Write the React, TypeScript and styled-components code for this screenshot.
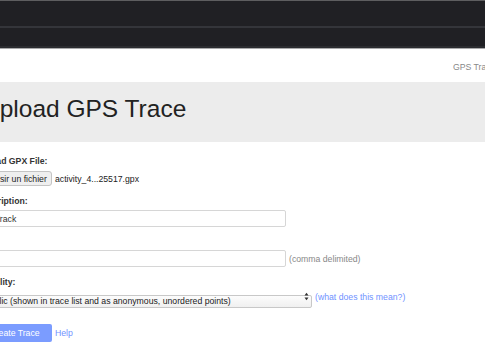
import styled, { createGlobalStyle } from 'styled-components';

const GlobalStyle = createGlobalStyle`
  html, body {
    margin: 0;
    padding: 0;
    background: #fff;
    overflow: hidden;
  }
  body {
    font-family: "Liberation Sans", Arial, Helvetica, sans-serif;
    color: #333;
  }
`;

const Viewport = styled.div`
  width: 485px;
  height: 360px;
  overflow: hidden;
`;

const Chrome = styled.div`
  display: flex;
  flex-direction: column;
`;

const ChromeBand = styled.div<{ $h: number; $bg: string }>`
  height: ${(p) => p.$h}px;
  background: ${(p) => p.$bg};
`;

const Page = styled.div`
  margin-left: -23px;
  width: calc(100% + 23px);
`;

const Nav = styled.div`
  display: flex;
  align-items: center;
  height: 33px;
  padding-left: 476px;
`;

const NavLink = styled.span`
  font-size: 8.7px;
  color: #888;
  white-space: nowrap;
  margin-top: 3px;
`;

const Banner = styled.div`
  background: #ececec;
  height: 60px;
  box-sizing: border-box;
  padding: 13px 0 0 5px;
`;

const Title = styled.h1`
  margin: 0;
  font-size: 24.5px;
  line-height: 28px;
  font-weight: 400;
  color: #222;
  white-space: nowrap;
`;

const Form = styled.form`
  display: flex;
  flex-direction: column;
  padding-top: 13px;
`;

const Field = styled.div<{ $gap?: number }>`
  display: flex;
  flex-direction: column;
  gap: ${(p) => p.$gap ?? 3}px;
  margin-bottom: 9px;
`;

const Label = styled.label`
  font-size: 8.7px;
  line-height: 12px;
  font-weight: 700;
  color: #333;
  white-space: nowrap;
`;

const Row = styled.div`
  display: flex;
  align-items: center;
  gap: 3px;
`;

const FileButton = styled.button`
  width: 75px;
  height: 15px;
  padding: 0;
  box-sizing: border-box;
  border: 1px solid #c4c4c4;
  border-radius: 3px;
  background: #efefef;
  font-family: inherit;
  font-size: 8.7px;
  color: #222;
  white-space: nowrap;
`;

const Hint = styled.span<{ $muted?: boolean }>`
  font-size: 8.7px;
  color: ${(p) => (p.$muted ? '#888' : '#222')};
  white-space: nowrap;
`;

const TextInput = styled.input`
  width: 309px;
  height: 17px;
  box-sizing: border-box;
  border: 1px solid #d6d6d6;
  border-radius: 2px;
  padding: 0 3px;
  font-family: inherit;
  font-size: 8.7px;
  color: #333;
  background: #fff;
  outline: none;
`;

const SelectWrap = styled.div`
  position: relative;
  width: 335px;
  height: 13px;
`;

const Select = styled.select`
  appearance: none;
  width: 100%;
  height: 100%;
  box-sizing: border-box;
  border: 1px solid #c8c8c8;
  border-radius: 2px;
  padding: 0 0 0 6px;
  font-family: inherit;
  font-size: 8.7px;
  line-height: 11px;
  color: #222;
  background: linear-gradient(#fcfcfc, #f0f0f0);
  outline: none;
`;

const SelectArrows = styled.svg`
  position: absolute;
  right: 3px;
  top: 2px;
  pointer-events: none;
`;

const Link = styled.a`
  font-size: 8.7px;
  color: #7092ff;
  text-decoration: none;
  white-space: nowrap;
`;

const Actions = styled.div`
  display: flex;
  align-items: center;
  gap: 3px;
  margin-top: 12px;
`;

const Submit = styled.button`
  width: 75px;
  height: 18px;
  padding: 0;
  border: none;
  border-radius: 2px;
  background: #7b9cff;
  color: #fff;
  font-family: inherit;
  font-size: 8.7px;
  white-space: nowrap;
`;

const App: React.FC = () => {
  return (
    <Viewport>
      <GlobalStyle />
      <Chrome>
        <ChromeBand $h={1} $bg="#5e5e60" />
        <ChromeBand $h={25} $bg="#202024" />
        <ChromeBand $h={2} $bg="#34353a" />
        <ChromeBand $h={18} $bg="#202024" />
        <ChromeBand $h={2} $bg="#2b2c30" />
        <ChromeBand $h={1} $bg="#a9a9ab" />
      </Chrome>
      <Page>
        <Nav>
          <NavLink>GPS Traces</NavLink>
        </Nav>
        <Banner>
          <Title>Upload GPS Trace</Title>
        </Banner>
        <Form onSubmit={(e) => e.preventDefault()}>
          <Field $gap={4}>
            <Label>Upload GPX File:</Label>
            <Row>
              <FileButton type="button">Choisir un fichier</FileButton>
              <Hint>activity_4...25517.gpx</Hint>
            </Row>
          </Field>
          <Field>
            <Label>Description:</Label>
            <TextInput defaultValue="My Track" />
          </Field>
          <Field $gap={2}>
            <Label>Tags:</Label>
            <Row>
              <TextInput />
              <Hint $muted>(comma delimited)</Hint>
            </Row>
          </Field>
          <Field $gap={2}>
            <Label>Visibility:</Label>
            <Row>
              <SelectWrap>
                <Select defaultValue="public">
                  <option value="public">
                    Public (shown in trace list and as anonymous, unordered points)
                  </option>
                </Select>
                <SelectArrows width="5" height="9" viewBox="0 0 5 9">
                  <path d="M0.5 3.5 L2.5 0.8 L4.5 3.5 Z" fill="#333" />
                  <path d="M0.5 5.5 L2.5 8.2 L4.5 5.5 Z" fill="#333" />
                </SelectArrows>
              </SelectWrap>
              <Link href="#">(what does this mean?)</Link>
            </Row>
          </Field>
          <Actions>
            <Submit type="submit">Create Trace</Submit>
            <Link href="#">Help</Link>
          </Actions>
        </Form>
      </Page>
    </Viewport>
  );
};

export default App;
